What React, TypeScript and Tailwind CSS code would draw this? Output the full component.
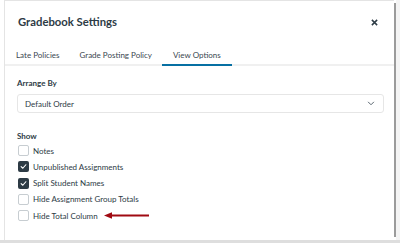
const options = [
  { label: 'Notes', checked: false },
  { label: 'Unpublished Assignments', checked: true },
  { label: 'Split Student Names', checked: true },
  { label: 'Hide Assignment Group Totals', checked: false },
  { label: 'Hide Total Column', checked: false, arrow: true },
]

function Check({ checked }: { checked: boolean }) {
  if (checked) {
    return (
      <span className="w-[11px] h-[11px] rounded-[2px] bg-[#2d3b45] flex items-center justify-center">
        <svg width="7" height="7" viewBox="0 0 8 8" fill="none">
          <path d="M1.3 4.2 L3.2 6 L6.7 2" stroke="#fff" strokeWidth="1.3" strokeLinecap="round" strokeLinejoin="round" />
        </svg>
      </span>
    )
  }
  return <span className="w-[11px] h-[11px] rounded-[2px] border border-[#c7cdd1] bg-white" />
}

export default function App() {
  return (
    <div className="w-[400px] h-[243px] bg-white flex flex-col overflow-hidden" style={{ fontFamily: 'Lato, "Open Sans", sans-serif' }}>
      <div className="flex flex-1 min-h-0">
        <div className="w-[4px]" />
        <div className="flex-1 flex flex-col border-l border-t border-[#e4e4e4] bg-white text-[#2d3b45]">
          <div className="flex items-center justify-between h-[42px] pl-[13px] pr-[16px] pt-[1px]">
            <h1 className="text-[11.3px] font-bold">Gradebook Settings</h1>
            <svg width="7" height="7" viewBox="0 0 8 8">
              <path d="M1 1 L7 7 M7 1 L1 7" stroke="#2d3b45" strokeWidth="1.7" />
            </svg>
          </div>
          <div className="flex items-end h-[23px] border-b-2 border-[#f0f0f0] text-[8px] text-[#3b4850]">
            <div className="pl-[11px] pr-[10px] pb-[3px]">Late Policies</div>
            <div className="px-[10px] pb-[3px]">Grade Posting Policy</div>
            <div className="px-[11px] pb-[3px] border-b-2 border-[#0770a3] -mb-[2px]">View Options</div>
          </div>
          <div className="pl-[12px] pr-[10px] pt-[11px]">
            <div className="text-[8px] font-bold leading-[12px]">Arrange By</div>
            <div className="mt-[5px] h-[19px] border border-[#e6e6e6] rounded-[3px] flex items-center justify-between pl-[7px] pr-[8px] text-[8px]">
              <span>Default Order</span>
              <svg width="8" height="5" viewBox="0 0 9 6" fill="none">
                <path d="M1 1 L4.5 4.5 L8 1" stroke="#5a6670" strokeWidth="1.2" />
              </svg>
            </div>
            <div className="mt-[17px] text-[8px] font-bold leading-[12px]">Show</div>
            <div className="mt-[3px] flex flex-col gap-[5.25px]">
              {options.map((o) => (
                <div key={o.label} className="flex items-center gap-[4px] h-[11px] text-[8px] pl-[1px]">
                  <Check checked={o.checked} />
                  <span>{o.label}</span>
                  {o.arrow && (
                    <svg width="46" height="7" viewBox="0 0 46 7" className="ml-[2px]">
                      <path d="M6 3.5 L45 3.5" stroke="#a00a12" strokeWidth="1.8" />
                      <path d="M0 3.5 L8 0.3 L8 6.7 Z" fill="#a00a12" />
                    </svg>
                  )}
                </div>
              ))}
            </div>
          </div>
        </div>
        <div className="w-[2px] bg-[#9b9b9b] mt-[3px] mb-[3px]" />
        <div className="w-[4px] bg-[#f4f4f4]" />
      </div>
      <div className="h-[3px] bg-[#dedede]" />
    </div>
  )
}
